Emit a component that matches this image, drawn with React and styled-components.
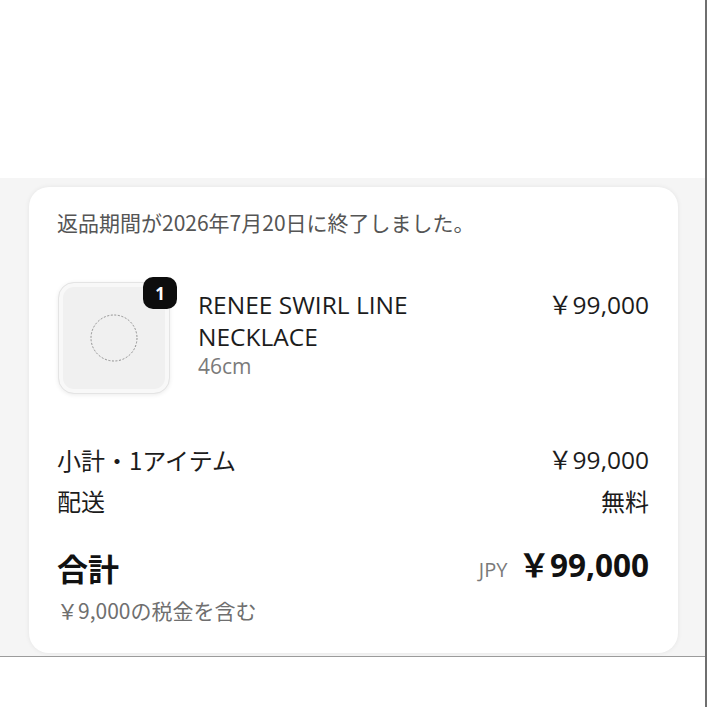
import React from "react";
import styled, { createGlobalStyle } from "styled-components";

const GlobalStyle = createGlobalStyle`
  html, body { margin: 0; padding: 0; background: #ffffff; }
  body { font-family: "Open Sans", "Noto Sans CJK JP", sans-serif; color: #1f1f1f; }
  * { box-sizing: border-box; }
`;

const Page = styled.div`
  width: 707px;
  min-height: 707px;
  border-right: 2px solid #6f6f6f;
  display: flex;
  flex-direction: column;
`;

const TopSpace = styled.div`
  height: 178px;
  background: #ffffff;
`;

const Band = styled.div`
  background: #f5f5f5;
  padding: 9px 27px 3px 29px;
  border-bottom: 1px solid #9c9c9c;
`;

const Card = styled.section`
  background: #ffffff;
  border-radius: 20px;
  box-shadow: 0 0 5px rgba(0, 0, 0, 0.07);
  padding: 21px 29px 30px 28px;
  display: flex;
  flex-direction: column;
`;

const Notice = styled.p`
  margin: 0;
  font-family: "Noto Sans CJK JP", sans-serif;
  font-size: 21px;
  line-height: 28px;
  color: #555555;
`;

const ItemRow = styled.div`
  margin-top: 46px;
  display: flex;
  align-items: flex-start;
`;

const ThumbWrap = styled.div`
  position: relative;
  flex: 0 0 auto;
  margin-left: 1px;
`;

const Thumb = styled.div`
  width: 112px;
  height: 112px;
  border-radius: 16px;
  background: #f0f0f0;
  border: 1px solid #e4e4e4;
  box-shadow: 0 1px 4px rgba(0, 0, 0, 0.08), inset 0 0 0 4px #f8f8f8;
  display: flex;
  align-items: center;
  justify-content: center;
`;

const Badge = styled.span`
  position: absolute;
  top: -5px;
  right: -7px;
  width: 34px;
  height: 32px;
  border-radius: 10px;
  background: #0d0d0d;
  color: #ffffff;
  font-family: "Open Sans", sans-serif;
  font-weight: 700;
  font-size: 17px;
  display: flex;
  align-items: center;
  justify-content: center;
`;

const Info = styled.div`
  flex: 1 1 auto;
  margin-left: 28px;
  padding-top: 7px;
  display: flex;
  flex-direction: column;
`;

const Name = styled.div`
  font-size: 24.5px;
  line-height: 32px;
  color: #1c1c1c;
  max-width: 240px;
`;

const Variant = styled.div`
  font-size: 21px;
  line-height: 26px;
  color: #7a7a7a;
`;

const Price = styled.div`
  padding-top: 7px;
  font-size: 24.5px;
  line-height: 32px;
  color: #1c1c1c;
  white-space: nowrap;
`;

const Summary = styled.div`
  margin-top: 50px;
  display: flex;
  flex-direction: column;
  gap: 9px;
`;

const Row = styled.div`
  display: flex;
  justify-content: space-between;
  align-items: center;
  font-size: 24.5px;
  line-height: 32px;
  color: #1c1c1c;
`;

const Jp = styled.span`
  font-family: "Noto Sans CJK JP", sans-serif;
  font-size: 24px;
`;

const TotalRow = styled.div`
  margin-top: 28px;
  display: flex;
  justify-content: space-between;
  align-items: center;
  line-height: 40px;
`;

const TotalLabel = styled.span`
  font-family: "Noto Sans CJK JP", sans-serif;
  font-weight: 700;
  font-size: 31px;
  color: #111111;
`;

const TotalValue = styled.div`
  display: flex;
  align-items: baseline;
  gap: 11px;
`;

const Currency = styled.span`
  font-size: 20px;
  color: #7a7a7a;
`;

const TotalPrice = styled.span`
  font-weight: 700;
  font-size: 31.5px;
  color: #111111;
`;

const TaxNote = styled.p`
  margin: 7px 0 0;
  font-family: "Noto Sans CJK JP", sans-serif;
  font-size: 21px;
  line-height: 26px;
  color: #6f6f6f;
`;

const DashedCircle = () => (
  <svg width="52" height="52" viewBox="0 0 52 52">
    <circle cx="26" cy="26" r="23" fill="none" stroke="#8f8f8f" strokeWidth="1" strokeDasharray="2 1.6" />
  </svg>
);

export default function App() {
  return (
    <>
      <GlobalStyle />
      <Page>
        <TopSpace />
        <Band>
          <Card>
            <Notice>返品期間が2026年7月20日に終了しました。</Notice>
            <ItemRow>
              <ThumbWrap>
                <Thumb>
                  <DashedCircle />
                </Thumb>
                <Badge>1</Badge>
              </ThumbWrap>
              <Info>
                <Name>RENEE SWIRL LINE NECKLACE</Name>
                <Variant>46cm</Variant>
              </Info>
              <Price>￥99,000</Price>
            </ItemRow>
            <Summary>
              <Row>
                <Jp>小計・1アイテム</Jp>
                <span>￥99,000</span>
              </Row>
              <Row>
                <Jp>配送</Jp>
                <Jp>無料</Jp>
              </Row>
            </Summary>
            <TotalRow>
              <TotalLabel>合計</TotalLabel>
              <TotalValue>
                <Currency>JPY</Currency>
                <TotalPrice>￥99,000</TotalPrice>
              </TotalValue>
            </TotalRow>
            <TaxNote>￥9,000の税金を含む</TaxNote>
          </Card>
        </Band>
      </Page>
    </>
  );
}
